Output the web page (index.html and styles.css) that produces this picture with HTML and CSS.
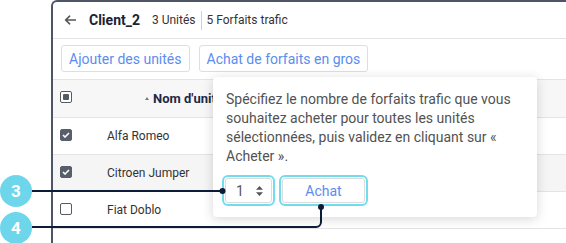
FILE: index.html
```html
<!DOCTYPE html>
<html lang="fr">
<head>
<meta charset="utf-8">
<title>Client_2</title>
<link rel="stylesheet" href="styles.css">
</head>
<body>
<div class="frame">
  <div class="header">
    <svg class="back" width="12" height="10" viewBox="0 0 12 10"><path d="M11.5 5H1.8M5.6 1.2L1.6 5l4 3.8" fill="none" stroke="#555" stroke-width="1.6" stroke-linecap="round" stroke-linejoin="round"/></svg>
    <span class="title">Client_2</span>
    <span class="meta">3 Unités</span>
    <span class="sep"></span>
    <span class="meta">5 Forfaits trafic</span>
  </div>
  <div class="toolbar">
    <button class="btn">Ajouter des unités</button>
    <button class="btn">Achat de forfaits en gros</button>
  </div>
  <div class="table">
    <div class="row head">
      <div class="cell-check"><span class="cb cb-ind"></span></div>
      <div class="cell-name head-name"><span class="sort"></span>Nom d'unité</div>
    </div>
    <div class="row">
      <div class="cell-check"><span class="cb cb-on"><svg width="8" height="6" viewBox="0 0 8 6"><path d="M1 3l2 2 4-4" fill="none" stroke="#fff" stroke-width="1.6"/></svg></span></div>
      <div class="cell-name">Alfa Romeo</div>
    </div>
    <div class="row alt">
      <div class="cell-check"><span class="cb cb-on"><svg width="8" height="6" viewBox="0 0 8 6"><path d="M1 3l2 2 4-4" fill="none" stroke="#fff" stroke-width="1.6"/></svg></span></div>
      <div class="cell-name">Citroen Jumper</div>
    </div>
    <div class="row">
      <div class="cell-check"><span class="cb"></span></div>
      <div class="cell-name">Fiat Doblo</div>
    </div>
  </div>
</div>

<div class="popup">
  <p class="popup-text">Spécifiez le nombre de forfaits trafic que vous souhaitez acheter pour toutes les unités sélectionnées, puis validez en cliquant sur « Acheter ».</p>
  <div class="popup-actions">
    <div class="num hl">
      <span>1</span>
      <svg width="7" height="10" viewBox="0 0 7 10"><path d="M3.5 0L7 3.8H0Z M0 6.2h7L3.5 10Z" fill="#555"/></svg>
    </div>
    <button class="buy hl">Achat</button>
  </div>
</div>

<svg class="leaders" width="566" height="243" viewBox="0 0 566 243">
  <path d="M32 191H222.5" stroke="#0c1b38" stroke-width="2" fill="none"/>
  <circle cx="222.5" cy="191" r="3" fill="#0c1b38"/>
  <path d="M32 227H316a5 5 0 0 0 5-5V207" stroke="#0c1b38" stroke-width="2" fill="none"/>
  <circle cx="321" cy="207" r="3" fill="#0c1b38"/>
</svg>
<div class="badge b3">3</div>
<div class="badge b4">4</div>
</body>
</html>
```
FILE: styles.css
```css
html, body {
  margin: 0;
  padding: 0;
}
body {
  width: 566px;
  height: 243px;
  overflow: hidden;
  position: relative;
  background: #fff;
  font-family: Roboto, "Liberation Sans", Arial, sans-serif;
  color: #333;
}
.frame {
  margin-left: 51px;
  height: 241px;
  border-left: 2px solid #4d5567;
  border-top: 2px solid #4d5567;
  border-top-left-radius: 6px;
}
.header {
  height: 36px;
  border-bottom: 1px solid #e4e4e4;
  display: flex;
  align-items: center;
  padding-left: 11px;
}
.back {
  margin-right: 13px;
  flex: none;
}
.title {
  font-size: 14px;
  font-weight: 700;
  color: #1b2233;
  margin-right: 12px;
}
.meta {
  font-size: 12px;
  color: #333;
}
.sep {
  width: 1px;
  height: 19px;
  background: #cfcfcf;
  margin: 0 5px;
}
.toolbar {
  display: flex;
  gap: 9px;
  padding: 6px 8px 7px;
}
.btn {
  height: 27px;
  padding: 0 7px;
  border: 1px solid #dedede;
  border-radius: 3px;
  background: #fff;
  color: #5b8def;
  font-family: Roboto, "Liberation Sans", Arial, sans-serif;
  font-size: 14px;
}
.table {
  border-top: 1px solid #e4e4e4;
}
.row {
  display: flex;
  align-items: center;
  height: 36px;
  border-bottom: 1px solid #e4e4e4;
}
.row.head {
  height: 37px;
  background: #f7f7f7;
}
.row.alt {
  background: #f5f5f5;
}
.cell-check {
  width: 47px;
  padding-left: 7px;
  display: flex;
  align-items: center;
}
.cb {
  width: 12px;
  height: 12px;
  box-sizing: border-box;
  border: 1px solid #555a64;
  border-radius: 2px;
  margin-bottom: 3px;
  display: flex;
  align-items: center;
  justify-content: center;
  background: #fff;
}
.cb-on {
  background: #585e6a;
  border-color: #585e6a;
}
.cb-ind::after {
  content: "";
  width: 6px;
  height: 6px;
  border-radius: 1px;
  background: #555a64;
}
.cell-name {
  font-size: 12px;
  color: #333;
}
.head-name {
  padding-left: 38px;
  font-size: 13px;
  font-weight: 700;
  color: #1d2a48;
  display: flex;
  align-items: center;
}
.sort {
  width: 0;
  height: 0;
  border-left: 2.5px solid transparent;
  border-right: 2.5px solid transparent;
  border-bottom: 3px solid #777;
  margin-right: 4px;
}
.popup {
  position: absolute;
  left: 213px;
  top: 77px;
  width: 324px;
  height: 140px;
  box-sizing: border-box;
  padding: 13px 13px 14px 12px;
  background: #fff;
  border-radius: 4px;
  box-shadow: 0 2px 12px rgba(0, 0, 0, 0.16);
}
.popup-text {
  margin: 0;
  padding-left: 1px;
  font-size: 14px;
  line-height: 19px;
  color: #525252;
}
.popup-actions {
  display: flex;
  gap: 10px;
  margin-top: 12px;
}
.hl {
  outline: 2px solid #72dcef;
  outline-offset: 1px;
}
.num {
  width: 47px;
  height: 25px;
  box-sizing: border-box;
  border: 1px solid #dcdcdc;
  border-radius: 3px;
  display: flex;
  align-items: center;
  justify-content: space-between;
  padding: 0 8px 0 10px;
  font-size: 14px;
  color: #555;
}
.buy {
  width: 83px;
  height: 25px;
  box-sizing: border-box;
  border: 1px solid #dcdcdc;
  border-radius: 3px;
  background: #fff;
  color: #5b8def;
  font-family: Roboto, "Liberation Sans", Arial, sans-serif;
  font-size: 14px;
  padding: 0;
}
.leaders {
  position: absolute;
  left: 0;
  top: 0;
}
.badge {
  position: absolute;
  left: 0;
  width: 32px;
  height: 32px;
  border-radius: 50%;
  background: #6dd6eb;
  color: #fff;
  font-size: 17px;
  font-weight: 700;
  display: flex;
  align-items: center;
  justify-content: center;
}
.b3 { top: 175px; }
.b4 { top: 212px; }
```
